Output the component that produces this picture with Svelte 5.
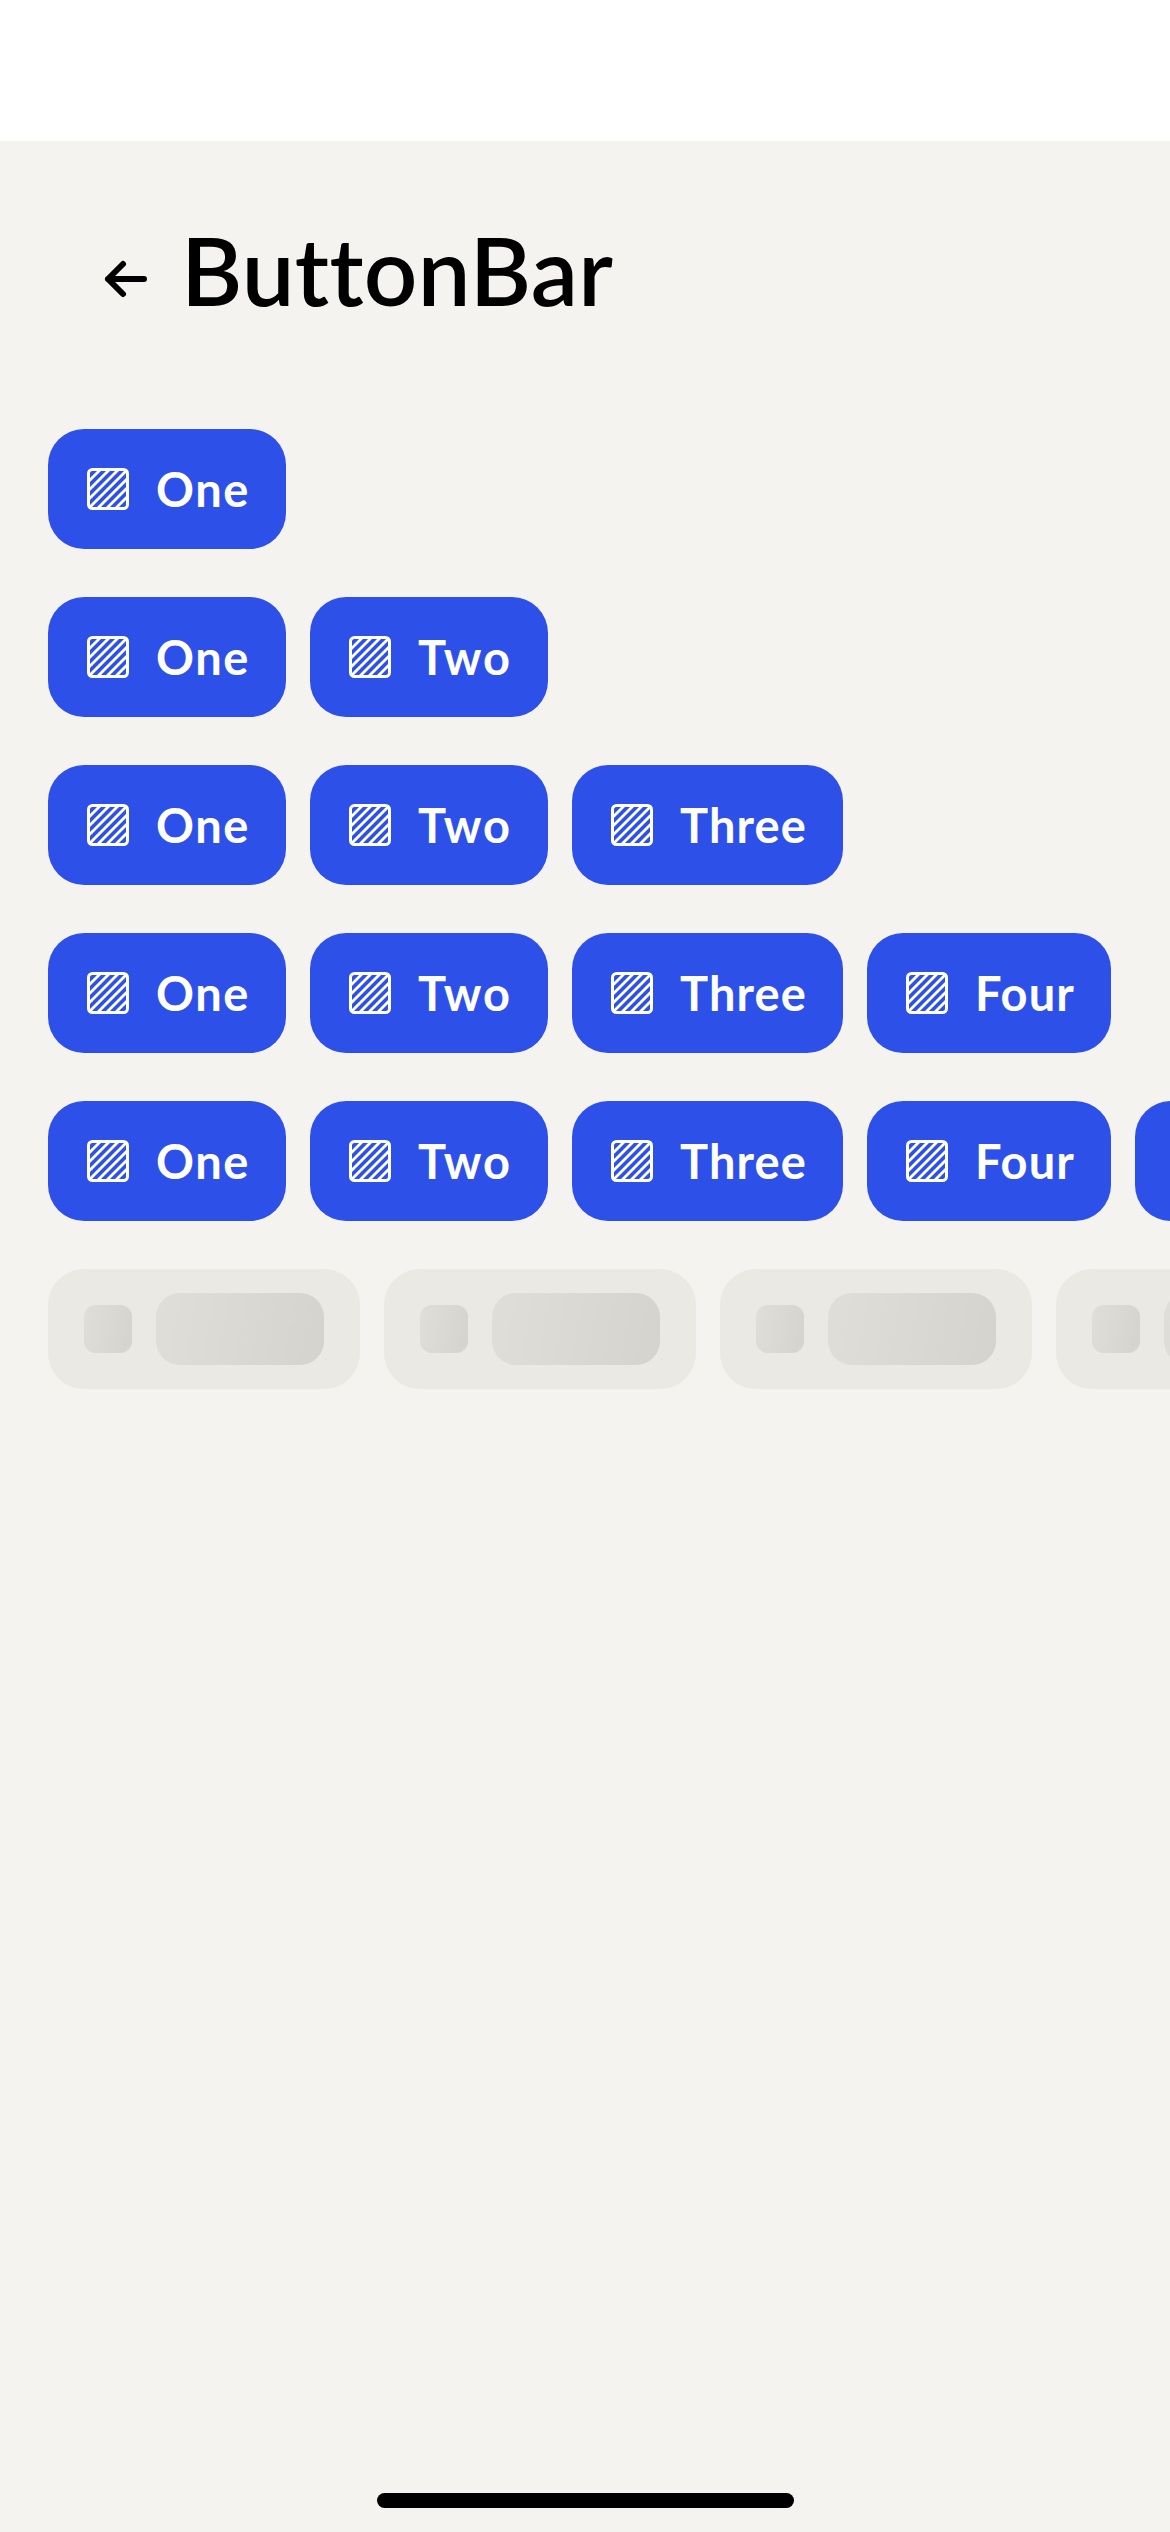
<script>
  const items = [
    { label: 'One', width: 238, spacing: 1.6 },
    { label: 'Two', width: 238, spacing: 1.7 },
    { label: 'Three', width: 271, spacing: 1.1 },
    { label: 'Four', width: 244, spacing: 1.1 },
    { label: 'Five', width: 238, spacing: 1.1 }
  ];
  const bars = [1, 2, 3, 4, 5].map((n) => items.slice(0, n));
  const placeholders = [0, 1, 2, 3];
  // Each value is the offset of a 45° stroke along the frame's edges
  const hatch = [11, 20, 29, 38, 47, 56, 65];
  const hatchPath = hatch
    .map((s) => (s <= 38 ? `M5 ${5 + s}L${5 + s} 5` : `M${s - 33} 43L43 ${s - 33}`))
    .join('');
</script>

<div class="screen">
  <div class="status"></div>
  <header>
    <svg class="back" viewBox="0 0 48 48" aria-hidden="true">
      <path d="M42 24H6M21 9L6 24L21 39" />
    </svg>
    <h1>ButtonBar</h1>
  </header>

  <main>
    {#each bars as bar}
      <div class="bar">
        {#each bar as item}
          <button style:width="{item.width}px" style:letter-spacing="{item.spacing}px">
            <svg class="icon" viewBox="0 0 48 48" aria-hidden="true">
              <rect x="4.5" y="4.5" width="39" height="39" rx="4" />
              <path d={hatchPath} />
            </svg>
            {item.label}
          </button>
        {/each}
      </div>
    {/each}
    <div class="bar">
      {#each placeholders as p (p)}
        <div class="skeleton">
          <span class="bone square"></span>
          <span class="bone text"></span>
        </div>
      {/each}
    </div>
  </main>

  <footer><div class="home"></div></footer>
</div>

<style>
  :global(body) {
    margin: 0;
    background: #f4f3ef;
  }
  .screen {
    display: flex;
    flex-direction: column;
    width: 1170px;
    height: 2532px;
    overflow: hidden;
    background: #f4f3ef;
    color: #000;
    font-family: Lato, 'Liberation Sans', sans-serif;
  }
  .status {
    flex: none;
    height: 141px;
    background: #fff;
  }
  header {
    flex: none;
    display: flex;
    align-items: center;
    gap: 31px;
    height: 276px;
    padding: 0 102px;
    box-sizing: border-box;
  }
  .back {
    flex: none;
    width: 48px;
    height: 48px;
    fill: none;
    stroke: #000;
    stroke-width: 6;
    stroke-linecap: round;
    stroke-linejoin: round;
  }
  h1 {
    margin: 0;
    padding-bottom: 18px;
    font-size: 94px;
    font-weight: 600;
    line-height: 120px;
    letter-spacing: 0.3px;
    font-variant-ligatures: none;
  }
  main {
    flex: 1;
    display: flex;
    flex-direction: column;
    gap: 48px;
    padding: 12px 0 0 48px;
  }
  .bar {
    display: flex;
    gap: 24px;
  }
  button {
    flex: none;
    display: flex;
    align-items: center;
    gap: 24px;
    height: 120px;
    padding: 0 0 0 36px;
    box-sizing: border-box;
    border: 0;
    border-radius: 36px;
    background: #2d51e8;
    color: #fff;
    font-family: inherit;
    font-size: 47px;
    font-weight: 700;
    line-height: 60px;
    white-space: nowrap;
  }
  .icon {
    flex: none;
    width: 48px;
    height: 48px;
    fill: none;
    stroke: #fff;
    stroke-width: 3;
  }
  .icon path {
    stroke-width: 2.8;
  }
  .skeleton {
    flex: none;
    display: flex;
    align-items: center;
    gap: 24px;
    width: 312px;
    height: 120px;
    padding: 0 36px;
    box-sizing: border-box;
    border-radius: 36px;
    background: #eae9e4;
  }
  .bone {
    background: linear-gradient(100deg, #dfded9, #d4d3ce);
  }
  .square {
    width: 48px;
    height: 48px;
    border-radius: 12px;
  }
  .text {
    width: 168px;
    height: 72px;
    border-radius: 24px;
  }
  footer {
    flex: none;
    display: flex;
    justify-content: center;
    padding-bottom: 24px;
  }
  .home {
    width: 417px;
    height: 15px;
    border-radius: 8px;
    background: #000;
  }
</style>
